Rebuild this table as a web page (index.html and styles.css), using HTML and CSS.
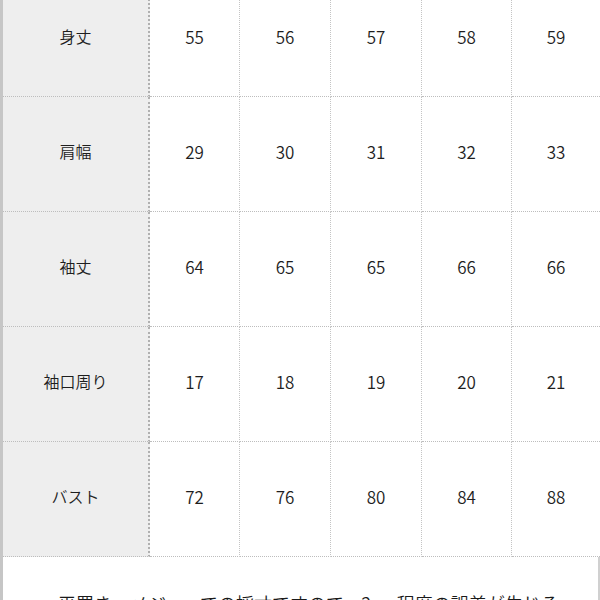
FILE: index.html
```html
<!DOCTYPE html>
<html lang="ja">
<head>
<meta charset="utf-8">
<link rel="stylesheet" href="styles.css">
</head>
<body>
<div class="sheet">
  <div class="grid">
    <div class="label">身丈</div><div class="cell">55</div><div class="cell">56</div><div class="cell">57</div><div class="cell">58</div><div class="cell last">59</div>
    <div class="label">肩幅</div><div class="cell">29</div><div class="cell">30</div><div class="cell">31</div><div class="cell">32</div><div class="cell last">33</div>
    <div class="label">袖丈</div><div class="cell">64</div><div class="cell">65</div><div class="cell">65</div><div class="cell">66</div><div class="cell last">66</div>
    <div class="label">袖口周り</div><div class="cell">17</div><div class="cell">18</div><div class="cell">19</div><div class="cell">20</div><div class="cell last">21</div>
    <div class="label">バスト</div><div class="cell">72</div><div class="cell">76</div><div class="cell">80</div><div class="cell">84</div><div class="cell last">88</div>
  </div>
  <div class="note">平置き・メジャーでの採寸ですので、2cm程度の誤差が生じる</div>
</div>
</body>
</html>
```
FILE: styles.css
```css
html, body {
  margin: 0;
  padding: 0;
  background: #ffffff;
  overflow: hidden;
}
body {
  width: 600px;
  height: 600px;
  font-family: "Noto Sans CJK JP", "Noto Sans", sans-serif;
  font-weight: 350;
  color: #1e1e1e;
}
.sheet {
  border-left: 3px solid #c6c6c6;
  margin-top: -18px;
}
.grid {
  display: grid;
  grid-template-columns: 147px 90px 91px 91px 90px 88px;
  grid-auto-rows: 115px;
}
.label, .cell {
  display: flex;
  align-items: center;
  justify-content: center;
  font-size: 17px;
  padding-bottom: 6px;
  border-bottom: 1px dotted #bdbdbd;
  border-right: 1px dotted #c4c4c4;
  box-sizing: border-box;
}
.label {
  background: #eeeeee;
  font-size: 16px;
  border-right: 2px dotted #b0b0b0;
}
.cell.last {
  border-right: none;
}
.note {
  border-right: 2px solid #d0d0d0;
  padding: 33px 0 20px 55px;
  font-size: 18px;
  line-height: 26px;
  color: #1a1a1a;
  white-space: nowrap;
}
```
